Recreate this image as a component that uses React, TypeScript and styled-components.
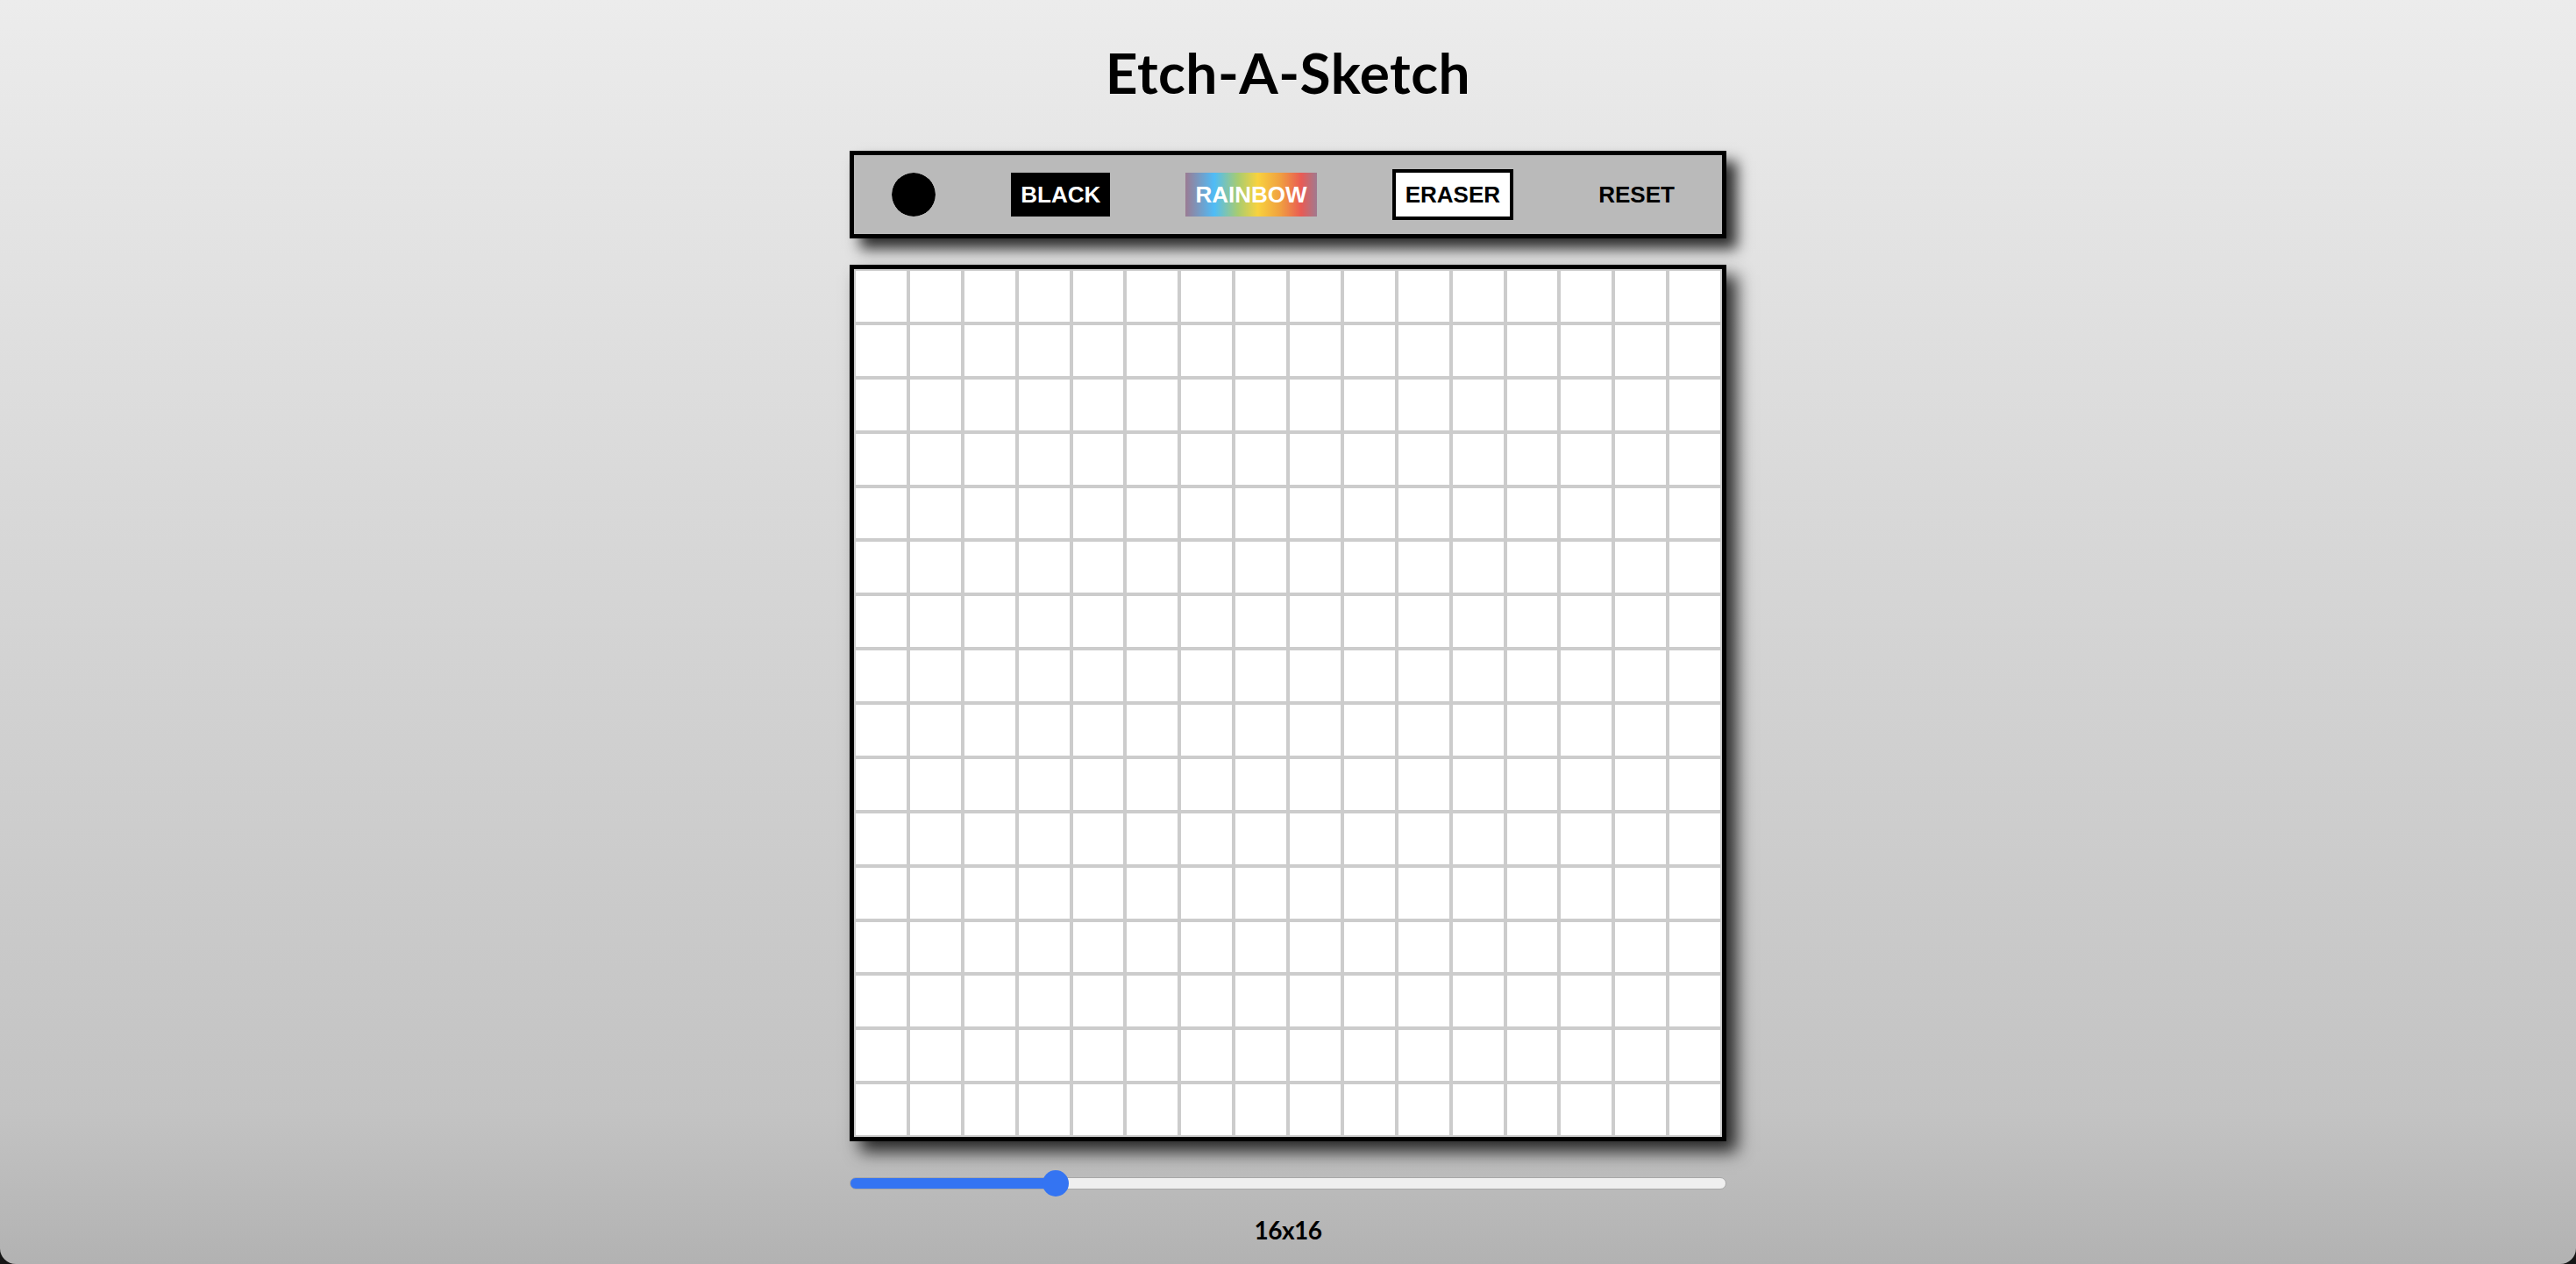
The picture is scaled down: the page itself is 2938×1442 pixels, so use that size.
import React, { useState } from 'react';
import styled, { createGlobalStyle, css } from 'styled-components';

const GlobalStyle = createGlobalStyle`
  * {
    box-sizing: border-box;
  }
  html, body {
    margin: 0;
    padding: 0;
    background: #161616;
    overflow: hidden;
  }
`;

const Page = styled.main`
  min-height: 100vh;
  display: flex;
  flex-direction: column;
  align-items: center;
  background: linear-gradient(180deg, #ececec 0%, #d6d6d6 45%, #c3c3c3 88%, #b2b2b2 100%);
  border-radius: 0 0 18px 18px;
  font-family: 'Lato', 'Noto Sans', sans-serif;
`;

const Title = styled.h1`
  margin: 51px 0 57px;
  font-size: 64px;
  line-height: 1;
  font-weight: 700;
  color: #000;
  letter-spacing: 0.5px;
`;

const Toolbar = styled.div`
  width: 1000px;
  height: 100px;
  display: flex;
  align-items: center;
  justify-content: space-around;
  background: #bababa;
  border: 5px solid #000;
  box-shadow: 12px 12px 15px rgba(0, 0, 0, 0.8);
`;

const ColorPicker = styled.input.attrs({ type: 'color' })`
  -webkit-appearance: none;
  appearance: none;
  width: 50px;
  height: 50px;
  padding: 0;
  border: none;
  border-radius: 50%;
  background: transparent;
  cursor: pointer;
  &::-webkit-color-swatch-wrapper {
    padding: 0;
  }
  &::-webkit-color-swatch {
    border: none;
    border-radius: 50%;
  }
`;

type Mode = 'black' | 'rainbow' | 'eraser' | 'reset';

const ModeButton = styled.button<{ $mode: Mode; $active?: boolean }>`
  font-family: 'Liberation Sans', Arial, sans-serif;
  font-size: 26px;
  font-weight: 700;
  line-height: 30px;
  padding: 10px 11px;
  border: none;
  cursor: pointer;
  color: #000;
  background: transparent;

  ${({ $mode }) =>
    $mode === 'black' &&
    css`
      background: #000;
      color: #fff;
    `}

  ${({ $mode }) =>
    $mode === 'rainbow' &&
    css`
      color: #fff;
      background: linear-gradient(
        90deg,
        #9b7b93 0%,
        #4fbcf7 22%,
        #a8cc70 40%,
        #f8d23e 55%,
        #f0a040 72%,
        #e95b54 88%,
        #a07a90 100%
      );
    `}

  ${({ $active }) =>
    $active &&
    css`
      background: #fff;
      color: #000;
      border: 4px solid #000;
    `}
`;

const Board = styled.div<{ $size: number }>`
  margin-top: 30px;
  width: 1000px;
  height: 1000px;
  display: grid;
  grid-template-columns: repeat(${({ $size }) => $size}, 1fr);
  grid-template-rows: repeat(${({ $size }) => $size}, 1fr);
  border: 5px solid #000;
  background: #fff;
  box-shadow: 12px 12px 18px rgba(0, 0, 0, 0.8);
`;

const Cell = styled.div`
  background: #fff;
  border: 2px solid #cccccc;
`;

const Slider = styled.input.attrs({ type: 'range' })`
  -webkit-appearance: none;
  appearance: none;
  width: 1000px;
  height: 30px;
  margin: 33px 0 0;
  background: transparent;
  cursor: pointer;

  &::-webkit-slider-runnable-track {
    height: 14px;
    border-radius: 7px;
    border: 1px solid #a8a8a8;
    background: linear-gradient(
      to right,
      #3474f2 0,
      #3474f2 var(--fill),
      #efefef var(--fill),
      #efefef 100%
    );
  }

  &::-webkit-slider-thumb {
    -webkit-appearance: none;
    appearance: none;
    width: 30px;
    height: 30px;
    margin-top: -9px;
    border: none;
    border-radius: 50%;
    background: #3474f2;
  }
`;

const SizeLabel = styled.div`
  margin-top: 24px;
  font-size: 28px;
  line-height: 1;
  font-weight: 700;
  color: #000;
  letter-spacing: -0.5px;
`;

const MIN = 2;
const MAX = 64;

export default function App() {
  const [size, setSize] = useState(16);
  const [mode, setMode] = useState<Mode>('eraser');

  const ratio = (size - MIN) / (MAX - MIN);
  const fill = `${15 + ratio * 970}px`;

  return (
    <>
      <GlobalStyle />
      <Page>
        <Title>Etch-A-Sketch</Title>
        <Toolbar>
          <ColorPicker defaultValue="#000000" />
          <ModeButton $mode="black" onClick={() => setMode('black')}>
            BLACK
          </ModeButton>
          <ModeButton $mode="rainbow" onClick={() => setMode('rainbow')}>
            RAINBOW
          </ModeButton>
          <ModeButton $mode="eraser" $active={mode === 'eraser'} onClick={() => setMode('eraser')}>
            ERASER
          </ModeButton>
          <ModeButton $mode="reset" onClick={() => setSize(16)}>
            RESET
          </ModeButton>
        </Toolbar>
        <Board $size={size}>
          {Array.from({ length: size * size }, (_, i) => (
            <Cell key={i} />
          ))}
        </Board>
        <Slider
          min={MIN}
          max={MAX}
          value={size}
          onChange={(e) => setSize(Number(e.target.value))}
          style={{ ['--fill' as string]: fill }}
        />
        <SizeLabel>
          {size}x{size}
        </SizeLabel>
      </Page>
    </>
  );
}
